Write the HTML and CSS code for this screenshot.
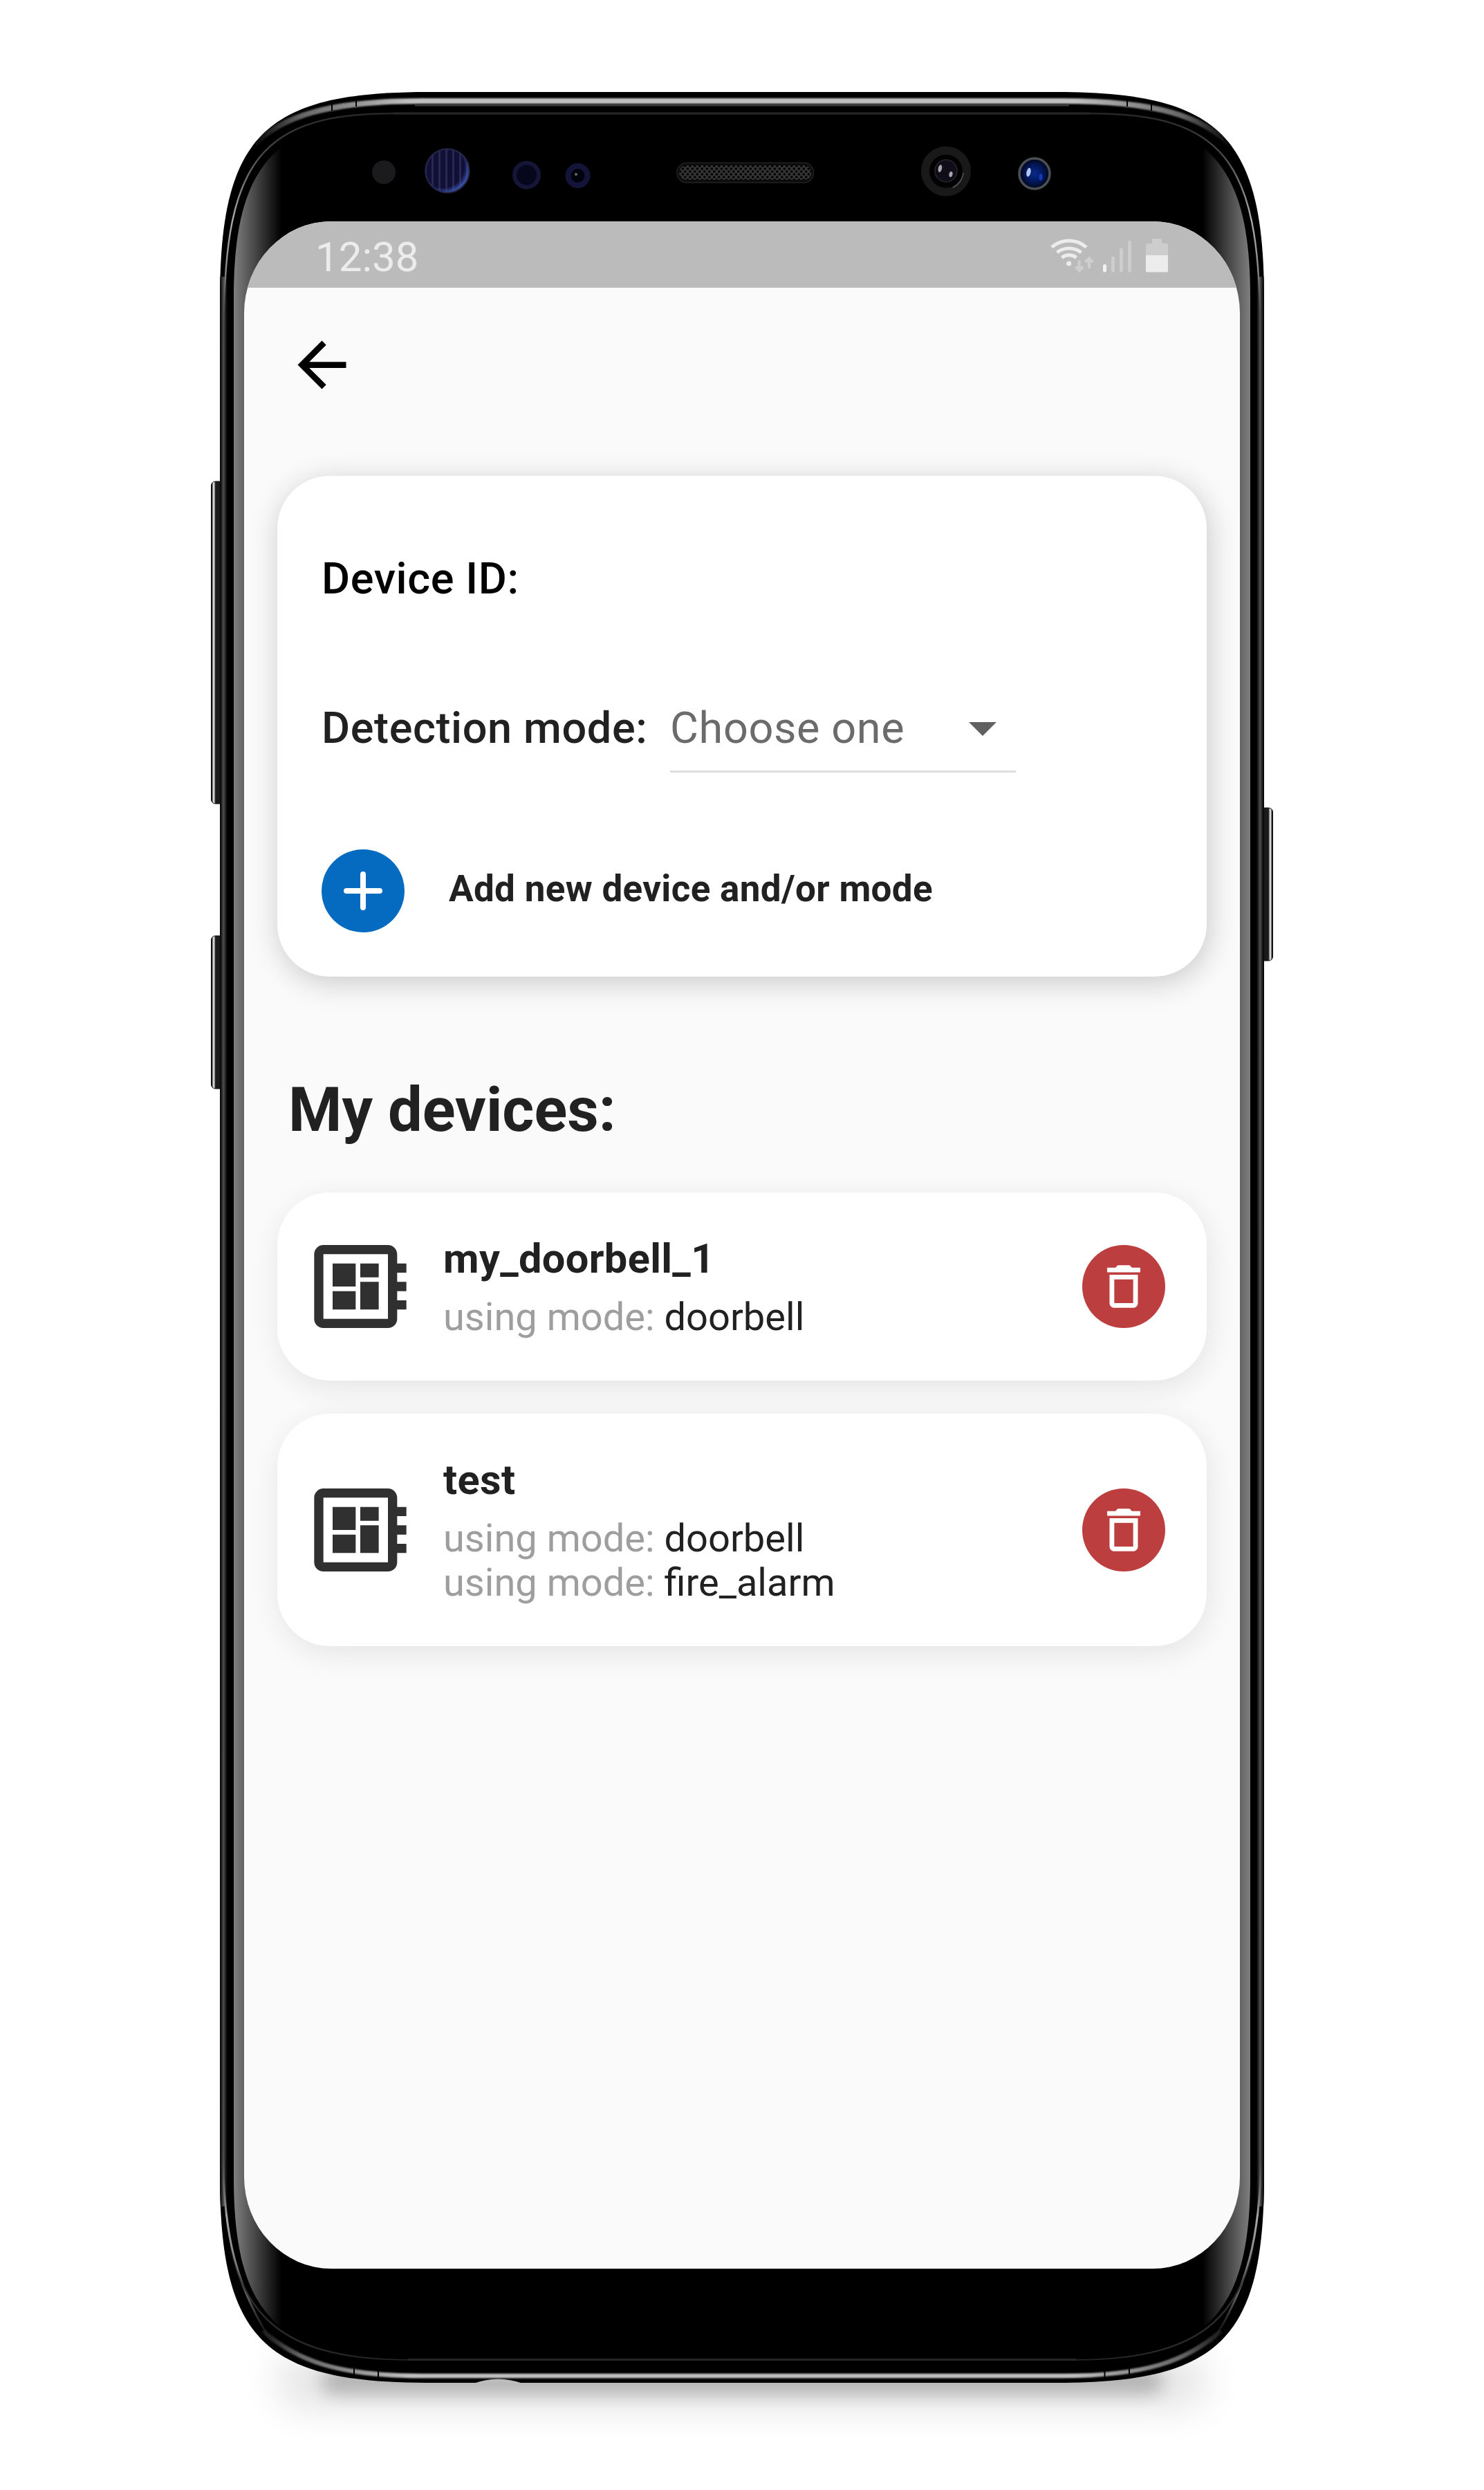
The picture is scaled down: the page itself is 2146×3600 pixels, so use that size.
FILE: index.html
```html
<!DOCTYPE html>
<html lang="en">
<head>
<meta charset="utf-8">
<title>My devices</title>
<link rel="stylesheet" href="styles.css">
</head>
<body>
<div class="stage">
  <svg class="phone" viewBox="0 0 2146 3600" width="2146" height="3600" aria-hidden="true">
    <defs>
      <path id="body" d="M318 433C318 197 382 133 618 133H1528C1764 133 1828 197 1828 433V3145C1828 3381 1764 3445 1528 3445H618C382 3445 318 3381 318 3145Z"/>
      <clipPath id="bodyClip"><use href="#body"/></clipPath>
      <filter id="soft1" x="-20%" y="-300%" width="140%" height="700%"><feGaussianBlur stdDeviation="13"/></filter>
      <filter id="soft2" x="-20%" y="-300%" width="140%" height="700%"><feGaussianBlur stdDeviation="28"/></filter>
      <filter id="b2" x="-5%" y="-200%" width="110%" height="500%"><feGaussianBlur stdDeviation="1.2"/></filter>
      <linearGradient id="glass" gradientUnits="userSpaceOnUse" x1="338" y1="0" x2="1808" y2="0">
        <stop offset="0" stop-color="#7e7e7e"/><stop offset=".0102" stop-color="#646464"/><stop offset=".047" stop-color="#000"/>
        <stop offset=".953" stop-color="#000"/><stop offset=".9898" stop-color="#646464"/><stop offset="1" stop-color="#7e7e7e"/>
      </linearGradient>
      <linearGradient id="shineX" gradientUnits="userSpaceOnUse" x1="365" y1="0" x2="1781" y2="0">
        <stop offset="0" stop-color="#000"/><stop offset=".05" stop-color="#666"/><stop offset=".16" stop-color="#c0c0c0"/>
        <stop offset=".84" stop-color="#c0c0c0"/><stop offset=".95" stop-color="#666"/><stop offset="1" stop-color="#000"/>
      </linearGradient>
      <linearGradient id="lineTop" gradientUnits="userSpaceOnUse" x1="0" y1="164" x2="0" y2="470">
        <stop offset="0" stop-color="#262626"/><stop offset=".2" stop-color="#4a4a4a"/><stop offset=".5" stop-color="#aaa"/><stop offset=".75" stop-color="#8a8a8a"/><stop offset="1" stop-color="#4a4a4a" stop-opacity="0"/>
      </linearGradient>
      <linearGradient id="lineBot" gradientUnits="userSpaceOnUse" x1="0" y1="3411" x2="0" y2="3240">
        <stop offset="0" stop-color="#262626"/><stop offset=".6" stop-color="#303030"/><stop offset="1" stop-color="#303030" stop-opacity="0"/>
      </linearGradient>
      <linearGradient id="sideBot" gradientUnits="userSpaceOnUse" x1="0" y1="3400" x2="0" y2="3120">
        <stop offset="0" stop-color="#222" stop-opacity="0"/><stop offset=".3" stop-color="#666"/><stop offset=".7" stop-color="#a8a8a8"/><stop offset="1" stop-color="#666" stop-opacity="0"/>
      </linearGradient>
      <linearGradient id="rim" x1="0" y1="0" x2="1" y2="0">
        <stop offset="0" stop-color="#000"/><stop offset=".2" stop-color="#1e1e1e"/><stop offset=".48" stop-color="#505050"/><stop offset=".75" stop-color="#1e1e1e"/><stop offset="1" stop-color="#000"/>
      </linearGradient>
      <linearGradient id="keyL" x1="0" y1="0" x2="1" y2="0">
        <stop offset="0" stop-color="#111"/><stop offset=".09" stop-color="#111"/><stop offset=".13" stop-color="#e4e7e5"/><stop offset=".24" stop-color="#c4c8c6"/><stop offset=".34" stop-color="#1d1d1d"/><stop offset="1" stop-color="#161616"/>
      </linearGradient>
      <linearGradient id="keyR" x1="1" y1="0" x2="0" y2="0">
        <stop offset="0" stop-color="#111"/><stop offset=".09" stop-color="#111"/><stop offset=".13" stop-color="#e4e7e5"/><stop offset=".24" stop-color="#c4c8c6"/><stop offset=".34" stop-color="#1d1d1d"/><stop offset="1" stop-color="#161616"/>
      </linearGradient>
      <pattern id="stripes" width="10" height="10" patternUnits="userSpaceOnUse" x="614">
        <rect width="10" height="10" fill="#101036"/><rect x="0" width="3" height="10" fill="#272752"/>
      </pattern>
      <pattern id="mesh" width="7" height="8" patternUnits="userSpaceOnUse" x="982" y="238">
        <rect width="7" height="8" fill="#343434"/><circle cx="1.8" cy="2" r="1.8"/><circle cx="5.3" cy="6" r="1.8"/>
      </pattern>
      <radialGradient id="glow" cx=".4" cy=".4" r=".62"><stop offset=".78" stop-color="#3448a0" stop-opacity="0"/><stop offset="1" stop-color="#3f58b4"/></radialGradient>
      <radialGradient id="blue"><stop offset="0" stop-color="#0a2a8a"/><stop offset=".5" stop-color="#031a60"/><stop offset="1" stop-color="#010618"/></radialGradient>
    </defs>

    <!-- floor shadow -->
    <rect x="400" y="3405" width="1346" height="76" rx="38" opacity=".11" filter="url(#soft2)"/>
    <rect x="465" y="3425" width="1216" height="36" rx="18" opacity=".23" filter="url(#soft1)"/>

    <!-- side keys -->
    <rect x="305.500" y="696" width="18" height="466" rx="6" fill="url(#keyL)" stroke="#111" stroke-width="1"/>
    <rect x="305.500" y="1353" width="18" height="221" rx="6" fill="url(#keyL)" stroke="#111" stroke-width="1"/>
    <rect x="1822.500" y="1168" width="18" height="221" rx="6" fill="url(#keyR)" stroke="#111" stroke-width="1"/>

    <use href="#body"/>
    <g clip-path="url(#bodyClip)">
      <rect x="318" y="400" width="11" height="2790" fill="url(#rim)"/>
      <rect x="1817" y="400" width="11" height="2790" fill="url(#rim)"/>
      <!-- metal edge -->
      <path d="M365 212C405 168 475 146 610 146H1536C1671 146 1741 168 1781 212" fill="none" stroke="url(#shineX)" stroke-width="8" filter="url(#b2)"/>
      <path d="M600 152H1546" stroke="#3a3a3a" stroke-width="3"/>
      <path d="M380 3370C430 3414 490 3435 610 3435H1536C1656 3435 1716 3414 1766 3370" fill="none" stroke="url(#shineX)" stroke-width="6.500" filter="url(#b2)"/>
      <path d="M323 3120C323 3230 342 3310 396 3390M1823 3120C1823 3230 1804 3310 1750 3390" fill="none" stroke="url(#sideBot)" stroke-width="3"/>
      <path d="M480 149V160M515 144V154M1630 144V154M1665 149V160M512 3424V3434M547 3427V3438M1597.500 3427V3438M1633 3424V3434" stroke="#000" stroke-width="2"/>
    </g>
    <path d="M324 470C324 230 380 164 570 164H1576C1766 164 1822 230 1822 470" fill="none" stroke="url(#lineTop)" stroke-width="2.400"/>
    <path d="M330 3240C356 3350 410 3411.500 590 3411.500H1556C1736 3411.500 1790 3350 1816 3240" fill="none" stroke="url(#lineBot)" stroke-width="2.400"/>
    <path d="M338 430C338 231 402 167 598 167H1548C1744 167 1808 231 1808 430V3148C1808 3347 1744 3411 1548 3411H598C402 3411 338 3347 338 3148Z" fill="url(#glass)"/>
    <path d="M570 164H1576M590 3411.500H1556" stroke="#262626" stroke-width="3"/>
    <!-- jack opening -->
    <path d="M685 3446Q720 3433 756 3446Z" fill="#bcbcbc"/>

    <!-- sensors, speaker and cameras -->
    <circle cx="555" cy="249" r="17" fill="#1b1b1d"/>
    <circle cx="647" cy="247" r="32.500" fill="url(#stripes)"/>
    <circle cx="647" cy="247" r="31.500" fill="url(#glow)" stroke="#25274a" stroke-width="2"/>
    <circle cx="761.500" cy="253" r="17.500" fill="#06061c" stroke="#151538" stroke-width="6"/>
    <circle cx="835.500" cy="254" r="14" fill="#02020c" stroke="#141438" stroke-width="8"/>
    <circle cx="833" cy="252" r="2" fill="#667"/>
    <rect x="979" y="235.500" width="197.500" height="28.500" rx="14" fill="#0c0c0c" stroke="#222" stroke-width="1.500"/>
    <rect x="982" y="239" width="191.500" height="21" rx="10.500" fill="url(#mesh)"/>
    <circle cx="1368" cy="247.500" r="30" fill="#020202" stroke="#191919" stroke-width="12"/>
    <circle cx="1368" cy="247" r="16" fill="#110d18" stroke="#28252e" stroke-width="1.500"/>
    <path d="M1378 271A26 26 0 0 0 1393 250" fill="none" stroke="#555" stroke-width="1.500"/>
    <ellipse cx="1359.500" cy="243.500" rx="2.700" ry="5.500" fill="#a8a4ac" transform="rotate(12 1359 243)"/>
    <ellipse cx="1375" cy="252" rx="2.500" ry="4" fill="#a8a4ac" transform="rotate(12 1375 252)"/>
    <circle cx="1496" cy="251" r="22" fill="url(#blue)" stroke="#4c5054" stroke-width="3.500"/>
    <ellipse cx="1487.500" cy="249" rx="3" ry="6.500" fill="#b4c6f4" transform="rotate(12 1487 249)"/>
    <ellipse cx="1505" cy="256" rx="2.500" ry="5" fill="#153ab8"/>
  </svg>

  <main class="screen">
    <header class="statusbar">
      <span class="clock">12:38</span>
      <svg class="status-icons" viewBox="1515 340 180 60" width="180" height="60">
        <g fill="none" stroke="#ececec" stroke-width="5">
          <path d="M1521 357.500A37.600 37.600 0 0 1 1571 357.500"/>
          <path d="M1528.500 365A28.500 28.500 0 0 1 1563.500 365"/>
          <path d="M1535.500 372.500A17 17 0 0 1 1556.500 372.500"/>
        </g>
        <circle cx="1545.700" cy="381" r="3.600" fill="#ececec"/>
        <path d="M1560.700 376.500V390M1555.500 385.500L1560.700 391L1566 385.500M1575 388V374M1569.500 379L1575 373.500L1580.500 379" fill="none" stroke="#cfcfcf" stroke-width="4"/>
        <rect x="1595" y="382" width="5" height="11.500" rx="2.500" fill="#f2f2f2"/>
        <g fill="#cdcdcd">
          <rect x="1607" y="371" width="5" height="22.500" rx="2"/>
          <rect x="1619" y="358.500" width="5" height="35" rx="2"/>
          <rect x="1631" y="348" width="5" height="45.500" rx="2"/>
          <path d="M1666 345h14v7h7a2 2 0 0 1 2 2v16h-32v-16a2 2 0 0 1 2-2h7z"/>
        </g>
        <path d="M1657 369h32v22.500a2 2 0 0 1-2 2h-28a2 2 0 0 1-2-2z" fill="#ececec"/>
      </svg>
    </header>

    <nav class="appbar">
      <svg class="back" viewBox="0 0 24 24"><path d="M20 11H7.830l5.590-5.590L12 4l-8 8 8 8 1.410-1.410L7.830 13H20v-2z"/></svg>
    </nav>

    <section class="card form">
      <div class="field id">Device ID:</div>
      <div class="row">
        <label class="field mode">Detection mode:</label>
        <div class="select">
          <span>Choose one</span>
          <svg class="caret" viewBox="0 0 40 20"><path d="M0 0h40L20 20z"/></svg>
        </div>
      </div>
      <div class="add">
        <span class="round plus"><svg viewBox="0 0 56 56" width="56" height="56"><path d="M4 28H52M28 4V52"/></svg></span>
        <span class="add-label">Add new device and/or mode</span>
      </div>
    </section>

    <h1 class="heading">My devices:</h1>

    <section class="list">
      <article class="card device">
        <svg class="chip" viewBox="0 0 24 24"><path d="M22 9V7h-2V5c0-1.100-.9-2-2-2H4c-1.100 0-2 .9-2 2v14c0 1.100.9 2 2 2h14c1.100 0 2-.9 2-2v-2h2v-2h-2v-2h2v-2h-2V9h2zm-4 10H4V5h14v14zM6 13h5v4H6zm6-6h4v3h-4zM6 7h5v5H6zm6 4h4v6h-4z"/></svg>
        <div class="info">
          <h2>my_doorbell_1</h2>
          <p>using mode: <b>doorbell</b></p>
        </div>
        <span class="round trash"><svg viewBox="0 0 24 24"><path d="M6 19c0 1.100.9 2 2 2h8c1.100 0 2-.9 2-2V7H6v12zM8 9h8v10H8V9zm7.500-5l-1-1h-5l-1 1H5v2h14V4h-3.500z"/></svg></span>
      </article>
      <article class="card device">
        <svg class="chip" viewBox="0 0 24 24"><path d="M22 9V7h-2V5c0-1.100-.9-2-2-2H4c-1.100 0-2 .9-2 2v14c0 1.100.9 2 2 2h14c1.100 0 2-.9 2-2v-2h2v-2h-2v-2h2v-2h-2V9h2zm-4 10H4V5h14v14zM6 13h5v4H6zm6-6h4v3h-4zM6 7h5v5H6zm6 4h4v6h-4z"/></svg>
        <div class="info">
          <h2>test</h2>
          <p>using mode: <b>doorbell</b></p>
          <p>using mode: <b>fire_alarm</b></p>
        </div>
        <span class="round trash"><svg viewBox="0 0 24 24"><path d="M6 19c0 1.100.9 2 2 2h8c1.100 0 2-.9 2-2V7H6v12zM8 9h8v10H8V9zm7.500-5l-1-1h-5l-1 1H5v2h14V4h-3.500z"/></svg></span>
      </article>
    </section>
  </main>
</div>
</body>
</html>
```
FILE: styles.css
```css
* { box-sizing: border-box; margin: 0; padding: 0; }
body { background: #fff; font-family: Roboto, "Liberation Sans", sans-serif; color: #212121; }
svg { display: block; flex: none; }

.stage { position: relative; width: 2146px; height: 3600px; padding: 320px 353px; overflow: hidden; }
.phone { position: absolute; left: 0; top: 0; }

.screen {
  position: relative;
  width: 1440px;
  height: 2960px;
  background: #fafafa;
  border-radius: 126px / 133px;
  overflow: hidden;
}

.statusbar {
  height: 96px;
  padding: 0 98px 0 103px;
  background: #bbb;
  display: flex;
  align-items: flex-start;
  justify-content: space-between;
}
.clock { font-size: 60px; line-height: 104px; color: #ececec; }
.status-icons { margin-top: 20px; }

.appbar { height: 272px; padding: 59px 0 0 59.500px; }
.back { width: 105px; height: 105px; }

.card {
  width: 1344px;
  margin: 0 48px;
  background: #fff;
  border-radius: 76px;
}

.form {
  height: 724px;
  padding: 99px 64px 0 64px;
  box-shadow: 3px 8px 44px rgba(0, 0, 0, .2);
}
.field { font-size: 63px; font-weight: 500; letter-spacing: .6px; line-height: 100px; white-space: nowrap; }
.id { color: #000; }
.row { display: flex; margin-top: 116px; }
.select {
  display: flex;
  justify-content: space-between;
  align-items: flex-start;
  width: 500px;
  height: 114px;
  margin-left: auto;
  margin-right: 212px;
  border-bottom: 3px solid #dedede;
  color: #6b6b6b;
  font-size: 63px;
  line-height: 100px;
  letter-spacing: .6px;
}
.caret { width: 40px; height: 20px; margin: 41px 28px 0 0; fill: #616161; }

.round { width: 120px; height: 120px; border-radius: 50%; display: flex; align-items: center; justify-content: center; flex: none; }
.add { display: flex; align-items: center; margin-top: 111px; gap: 64px; }
.plus { background: #056bc1; }
.plus svg { fill: none; stroke: #fff; stroke-width: 8px; stroke-linecap: round; }
.add-label { font-size: 53px; font-weight: 700; letter-spacing: .32px; line-height: 62px; padding-bottom: 6px; white-space: nowrap; }

.heading { margin: 143px 0 69px 64px; font-size: 88.500px; line-height: 100px; font-weight: 700; }

.list { display: flex; flex-direction: column; gap: 48px; }
.device {
  display: flex;
  align-items: center;
  padding: 0 60px 0 40px;
  box-shadow: 3px 10px 44px rgba(0, 0, 0, .09);
}
.chip { width: 160px; height: 160px; fill: #303030; }
.info { flex: 1; align-self: flex-start; margin-left: 40px; padding: 64px 0 60px; }
.info h2 { font-size: 59.500px; line-height: 64px; letter-spacing: .35px; margin-bottom: 20px; }
.info p { font-size: 56px; line-height: 64px; color: #9e9e9e; }
.info b { font-weight: 400; color: #212121; }
.trash { background: #bd3e3f; }
.trash svg { width: 82px; height: 82px; fill: #fff; }
```
